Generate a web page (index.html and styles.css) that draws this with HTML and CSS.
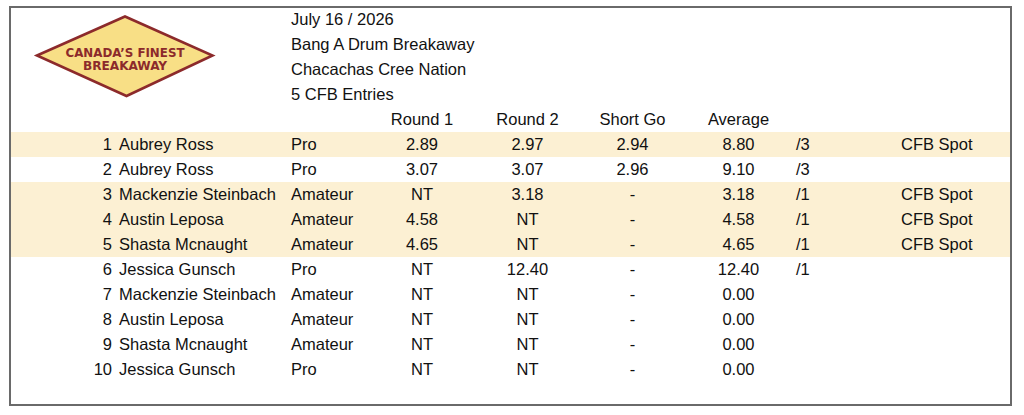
FILE: index.html
```html
<!DOCTYPE html>
<html lang="en">
<head>
<meta charset="utf-8">
<title>Bang A Drum Breakaway - Results</title>
<link rel="stylesheet" href="styles.css">
</head>
<body>
<div class="frame">
  <div class="header">
    <div class="logo">
      <svg width="280" height="100" viewBox="11 7 280 100" xmlns="http://www.w3.org/2000/svg">
        <polygon points="37,55.5 125,16.5 212.5,55.5 126.5,96" fill="#F8DF86" stroke="#8C2A2B" stroke-width="2.6" stroke-linejoin="miter"/>
        <text x="125" y="56.5" text-anchor="middle" class="logo-text" textLength="119" lengthAdjust="spacingAndGlyphs">CANADA’S FINEST</text>
        <text x="125" y="69.5" text-anchor="middle" class="logo-text" textLength="84" lengthAdjust="spacingAndGlyphs">BREAKAWAY</text>
      </svg>
    </div>
    <div class="info">
      <div class="line">July 16 / 2026</div>
      <div class="line">Bang A Drum Breakaway</div>
      <div class="line">Chacachas Cree Nation</div>
      <div class="line">5 CFB Entries</div>
    </div>
  </div>
  <div class="table">
    <div class="row">
      <div></div><div></div><div></div>
      <div class="c">Round 1</div><div class="c">Round 2</div><div class="c">Short Go</div><div class="c">Average</div>
      <div></div><div></div>
    </div>
    <div class="row hl">
      <div class="rank">1</div><div class="name">Aubrey Ross</div><div>Pro</div>
      <div class="c">2.89</div><div class="c">2.97</div><div class="c">2.94</div><div class="c">8.80</div>
      <div class="runs">/3</div><div class="spot">CFB Spot</div>
    </div>
    <div class="row">
      <div class="rank">2</div><div class="name">Aubrey Ross</div><div>Pro</div>
      <div class="c">3.07</div><div class="c">3.07</div><div class="c">2.96</div><div class="c">9.10</div>
      <div class="runs">/3</div><div class="spot"></div>
    </div>
    <div class="row hl">
      <div class="rank">3</div><div class="name">Mackenzie Steinbach</div><div>Amateur</div>
      <div class="c">NT</div><div class="c">3.18</div><div class="c">-</div><div class="c">3.18</div>
      <div class="runs">/1</div><div class="spot">CFB Spot</div>
    </div>
    <div class="row hl">
      <div class="rank">4</div><div class="name">Austin Leposa</div><div>Amateur</div>
      <div class="c">4.58</div><div class="c">NT</div><div class="c">-</div><div class="c">4.58</div>
      <div class="runs">/1</div><div class="spot">CFB Spot</div>
    </div>
    <div class="row hl">
      <div class="rank">5</div><div class="name">Shasta Mcnaught</div><div>Amateur</div>
      <div class="c">4.65</div><div class="c">NT</div><div class="c">-</div><div class="c">4.65</div>
      <div class="runs">/1</div><div class="spot">CFB Spot</div>
    </div>
    <div class="row">
      <div class="rank">6</div><div class="name">Jessica Gunsch</div><div>Pro</div>
      <div class="c">NT</div><div class="c">12.40</div><div class="c">-</div><div class="c">12.40</div>
      <div class="runs">/1</div><div class="spot"></div>
    </div>
    <div class="row">
      <div class="rank">7</div><div class="name">Mackenzie Steinbach</div><div>Amateur</div>
      <div class="c">NT</div><div class="c">NT</div><div class="c">-</div><div class="c">0.00</div>
      <div class="runs"></div><div class="spot"></div>
    </div>
    <div class="row">
      <div class="rank">8</div><div class="name">Austin Leposa</div><div>Amateur</div>
      <div class="c">NT</div><div class="c">NT</div><div class="c">-</div><div class="c">0.00</div>
      <div class="runs"></div><div class="spot"></div>
    </div>
    <div class="row">
      <div class="rank">9</div><div class="name">Shasta Mcnaught</div><div>Amateur</div>
      <div class="c">NT</div><div class="c">NT</div><div class="c">-</div><div class="c">0.00</div>
      <div class="runs"></div><div class="spot"></div>
    </div>
    <div class="row">
      <div class="rank">10</div><div class="name">Jessica Gunsch</div><div>Pro</div>
      <div class="c">NT</div><div class="c">NT</div><div class="c">-</div><div class="c">0.00</div>
      <div class="runs"></div><div class="spot"></div>
    </div>
  </div>
</div>
</body>
</html>
```

FILE: styles.css
```css
* { box-sizing: border-box; }

html, body {
  margin: 0;
  padding: 0;
  background: #ffffff;
}

body {
  font-family: "Liberation Sans", Arial, Helvetica, sans-serif;
  font-size: 16.5px;
  color: #111111;
}

.frame {
  margin: 6px 0 0 9px;
  width: 1003px;
  height: 400px;
  border: 2px solid #6a6a6a;
  overflow: hidden;
}

.header {
  display: flex;
  margin-top: -1px;
}

.logo {
  width: 280px;
  height: 100px;
  flex: none;
}

.logo svg {
  display: block;
}

.logo-text {
  font-family: "DejaVu Sans", sans-serif;
  font-stretch: condensed;
  font-weight: bold;
  font-size: 11.8px;
  fill: #8C2A2B;
}

.info {
  display: flex;
  flex-direction: column;
}

.line {
  height: 25px;
  line-height: 25px;
  white-space: nowrap;
}

.table {
  display: flex;
  flex-direction: column;
}

.row {
  display: grid;
  grid-template-columns: 101px 179px 78px 106px 105px 105px 107px 88px 1fr;
  height: 25px;
  line-height: 25px;
  white-space: nowrap;
}

.row.hl {
  background: #FCF0D3;
}

.rank {
  text-align: right;
}

.name {
  padding-left: 7px;
}

.c {
  text-align: center;
}

.runs {
  padding-left: 4px;
}

.spot {
  padding-left: 21px;
}
```
